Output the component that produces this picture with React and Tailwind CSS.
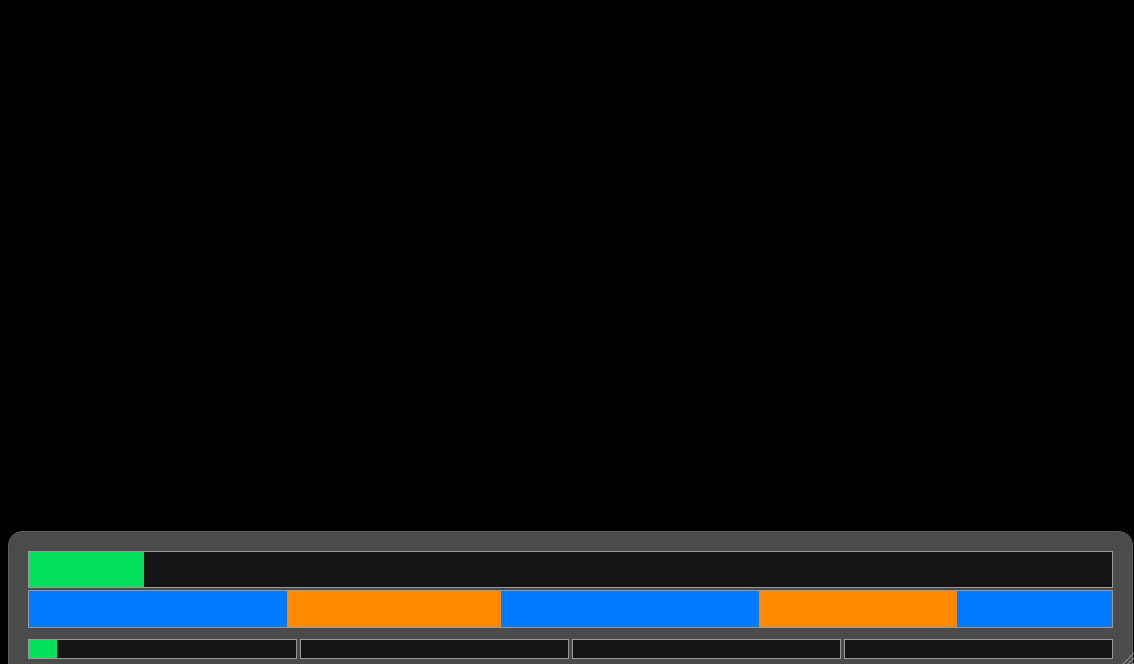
export default function App() {
  const segs = [
    { w: 258, c: "bg-[#007bff]" },
    { w: 214, c: "bg-[#ff8a00]" },
    { w: 258, c: "bg-[#007bff]" },
    { w: 198, c: "bg-[#ff8a00]" },
    { w: 155, c: "bg-[#007bff]" },
  ];
  return (
    <div className="w-[1134px] h-[664px] bg-black overflow-hidden pt-[531px] pl-[8px]">
      <div className="relative w-[1125px] h-[160px] rounded-[14px] border border-[#5c5c5c] bg-[#4b4b4b] pt-[19px] pl-[19px] pr-[19px]">
        <div className="flex flex-col">
          <div className="h-[37px] border border-[#999999] bg-[#141414] flex">
            <div className="w-[115px] h-full bg-[#00e05c]" />
          </div>
          <div className="mt-[2px] h-[38px] border border-[#999999] bg-[#141414] flex">
            {segs.map((s, i) => (
              <div key={i} className={`h-full ${s.c}`} style={{ width: s.w }} />
            ))}
          </div>
          <div className="mt-[11px] grid grid-cols-4 gap-[3px]">
            <div className="h-[20px] border border-[#999999] bg-[#141414] flex">
              <div className="w-[28px] h-full bg-[#00e05c]" />
            </div>
            <div className="h-[20px] border border-[#999999] bg-[#141414]" />
            <div className="h-[20px] border border-[#999999] bg-[#141414]" />
            <div className="h-[20px] border border-[#999999] bg-[#141414]" />
          </div>
        </div>
        <svg className="absolute left-[1108px] top-[114px]" width="18" height="20" viewBox="0 0 18 20">
          <line x1="4" y1="20" x2="18" y2="6" stroke="#8a8a8a" strokeWidth="1.2" />
          <line x1="9" y1="20" x2="18" y2="11" stroke="#8a8a8a" strokeWidth="1.2" />
          <line x1="14" y1="20" x2="18" y2="16" stroke="#8a8a8a" strokeWidth="1.2" />
        </svg>
      </div>
    </div>
  );
}
